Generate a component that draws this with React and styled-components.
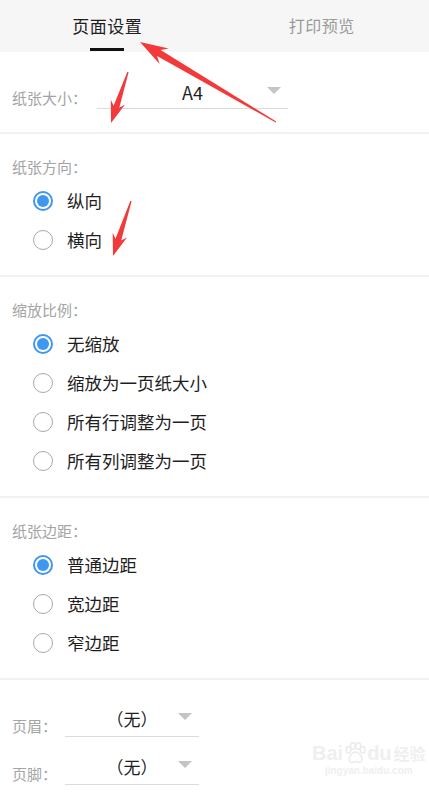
import React from 'react';
import styled, { createGlobalStyle } from 'styled-components';

const GlobalStyle = createGlobalStyle`
  html, body {
    margin: 0;
    padding: 0;
    background: #fff;
  }
  body {
    font-family: "Noto Sans CJK SC", "Noto Sans", sans-serif;
    -webkit-font-smoothing: antialiased;
  }
`;

const blue = '#3f97ef';

const Page = styled.div`
  position: relative;
  width: 429px;
  height: 794px;
  overflow: hidden;
  background: #fff;
`;

const TabBar = styled.div`
  display: flex;
  height: 52px;
  background: #f6f6f6;
`;

const Tab = styled.div`
  position: relative;
  flex: 1;
  display: flex;
  align-items: center;
  justify-content: center;
  padding-bottom: 2px;
  font-size: ${p => (p.$active ? '17px' : '16px')};
  color: ${p => (p.$active ? '#1e1e1e' : '#9a9a9a')};
  letter-spacing: 0.5px;

  &::after {
    content: '';
    display: ${p => (p.$active ? 'block' : 'none')};
    position: absolute;
    bottom: 1px;
    left: 50%;
    width: 34px;
    height: 3px;
    margin-left: -17px;
    background: #111;
  }
`;

const Section = styled.div`
  padding: ${p => p.$pad || '23px 0 16px'};
  border-bottom: ${p => (p.$last ? 'none' : '2px solid #f2f2f2')};
`;

const Label = styled.div`
  height: 20px;
  line-height: 20px;
  padding-left: 12px;
  font-size: 15px;
  color: #a4a4a4;
  white-space: nowrap;
`;

const FieldRow = styled.div`
  display: flex;
  align-items: flex-end;
  padding-left: 12px;
  & + & {
    margin-top: 15px;
  }
`;

const FieldLabel = styled(Label)`
  padding-left: 0;
  width: ${p => p.$w}px;
  margin-bottom: 1px;
`;

const Select = styled.div`
  position: relative;
  box-sizing: border-box;
  width: ${p => p.$w}px;
  height: 33px;
  border-bottom: 1px solid #dcdcdc;
  display: flex;
  align-items: center;
  justify-content: center;
  padding-bottom: ${p => p.$lift || 0}px;
  font-size: ${p => p.$size || 17}px;
  color: #1e1e1e;
`;

const Caret = styled.span`
  position: absolute;
  right: 7px;
  top: ${p => p.$top}px;
  width: 0;
  height: 0;
  border-left: 7px solid transparent;
  border-right: 7px solid transparent;
  border-top: 7px solid #c4c4c4;
`;

const Options = styled.div`
  margin-top: 4px;
  padding-left: 33px;
`;

const Option = styled.div`
  display: flex;
  align-items: center;
  height: 39px;
  font-size: 17.5px;
  color: #1e1e1e;
`;

const Radio = styled.span`
  box-sizing: border-box;
  width: 20px;
  height: 20px;
  border-radius: 50%;
  border: ${p => (p.$on ? `2px solid ${blue}` : '1.5px solid #a8a8a8')};
  margin-right: 14px;
  display: flex;
  align-items: center;
  justify-content: center;

  &::after {
    content: '';
    display: ${p => (p.$on ? 'block' : 'none')};
    width: 12px;
    height: 12px;
    border-radius: 50%;
    background: ${blue};
  }
`;

const Overlay = styled.svg`
  position: absolute;
  left: 0;
  top: 0;
  pointer-events: none;
`;

const Watermark = styled.div`
  position: absolute;
  left: 312px;
  top: 742px;
  display: flex;
  flex-direction: column;
  align-items: center;
  color: #efefef;
  font-family: "Liberation Sans", sans-serif;
  pointer-events: none;
`;

const MarkTop = styled.div`
  display: flex;
  align-items: flex-end;
  font-size: 20px;
  font-weight: bold;
  line-height: 22px;
`;

const MarkCjk = styled.span`
  font-family: "Noto Sans CJK SC", sans-serif;
  font-size: 16px;
  margin-left: 2px;
`;

const MarkUrl = styled.div`
  font-size: 10px;
  line-height: 14px;
  font-weight: bold;
`;

// red annotation arrow from tail to tip
function arrowPoints(tail, tip, headLen, headHalf, shaftHalf) {
  const dx = tip[0] - tail[0];
  const dy = tip[1] - tail[1];
  const len = Math.hypot(dx, dy);
  const ux = dx / len;
  const uy = dy / len;
  const nx = -uy;
  const ny = ux;
  const bx = tip[0] - ux * headLen;
  const by = tip[1] - uy * headLen;
  const nbx = tip[0] - ux * headLen * 0.78;
  const nby = tip[1] - uy * headLen * 0.78;
  const pts = [
    tip,
    [bx + nx * headHalf, by + ny * headHalf],
    [nbx + nx * shaftHalf, nby + ny * shaftHalf],
    [tail[0] + nx * 0.6, tail[1] + ny * 0.6],
    [tail[0] - nx * 0.6, tail[1] - ny * 0.6],
    [nbx - nx * shaftHalf, nby - ny * shaftHalf],
    [bx - nx * headHalf, by - ny * headHalf]
  ];
  return pts.map(p => `${p[0].toFixed(1)},${p[1].toFixed(1)}`).join(' ');
}

const arrows = [
  { tail: [276, 122], tip: [140, 42], head: 28, half: 9, shaft: 3.5 },
  { tail: [128, 72], tip: [111, 123], head: 22, half: 7.5, shaft: 3 },
  { tail: [131, 201], tip: [113, 256], head: 22, half: 7.5, shaft: 3 }
];

const groups = [
  { title: '纸张方向：', items: ['纵向', '横向'], selected: 0 },
  { title: '缩放比例：', items: ['无缩放', '缩放为一页纸大小', '所有行调整为一页', '所有列调整为一页'], selected: 0 },
  { title: '纸张边距：', items: ['普通边距', '宽边距', '窄边距'], selected: 0 }
];

const Paw = () => (
  <svg width="24" height="22" viewBox="0 0 22 20" fill="none" stroke="#ebebeb" strokeWidth="1.4">
    <ellipse cx="5" cy="7" rx="2.2" ry="3" />
    <ellipse cx="9" cy="3.5" rx="2.2" ry="3" />
    <ellipse cx="14" cy="3.5" rx="2.2" ry="3" />
    <ellipse cx="18" cy="7" rx="2.2" ry="3" />
    <path d="M11.5 9c-3 0-6 4-6 7 0 2 2 3 3.5 2.5 1-.3 1.7-.6 2.5-.6s1.5.3 2.5.6c1.5.5 3.5-.5 3.5-2.5 0-3-3-7-6-7z" />
  </svg>
);

const App = () => (
  <Page>
    <GlobalStyle />
    <TabBar>
      <Tab $active>页面设置</Tab>
      <Tab>打印预览</Tab>
    </TabBar>

    <Section $pad="24px 0 23px">
      <FieldRow>
        <FieldLabel $w={85}>纸张大小：</FieldLabel>
        <Select $w={191} $size={18} $lift={1}>
          A4
          <Caret $top={11} />
        </Select>
      </FieldRow>
    </Section>

    {groups.map(g => (
      <Section key={g.title}>
        <Label>{g.title}</Label>
        <Options>
          {g.items.map((item, i) => (
            <Option key={item}>
              <Radio $on={i === g.selected} />
              {item}
            </Option>
          ))}
        </Options>
      </Section>
    ))}

    <Section $pad="24px 0 0" $last>
      <FieldRow>
        <FieldLabel $w={53}>页眉：</FieldLabel>
        <Select $w={134} $lift={4}>
          （无）
          <Caret $top={9} />
        </Select>
      </FieldRow>
      <FieldRow>
        <FieldLabel $w={53}>页脚：</FieldLabel>
        <Select $w={134} $lift={4}>
          （无）
          <Caret $top={9} />
        </Select>
      </FieldRow>
    </Section>

    <Watermark>
      <MarkTop>
        Bai
        <Paw />
        du
        <MarkCjk>经验</MarkCjk>
      </MarkTop>
      <MarkUrl>jingyan.baidu.com</MarkUrl>
    </Watermark>

    <Overlay width="429" height="794" viewBox="0 0 429 794">
      {arrows.map((a, i) => (
        <polygon key={i} points={arrowPoints(a.tail, a.tip, a.head, a.half, a.shaft)} fill="#f23a3a" />
      ))}
    </Overlay>
  </Page>
);

export default App;
